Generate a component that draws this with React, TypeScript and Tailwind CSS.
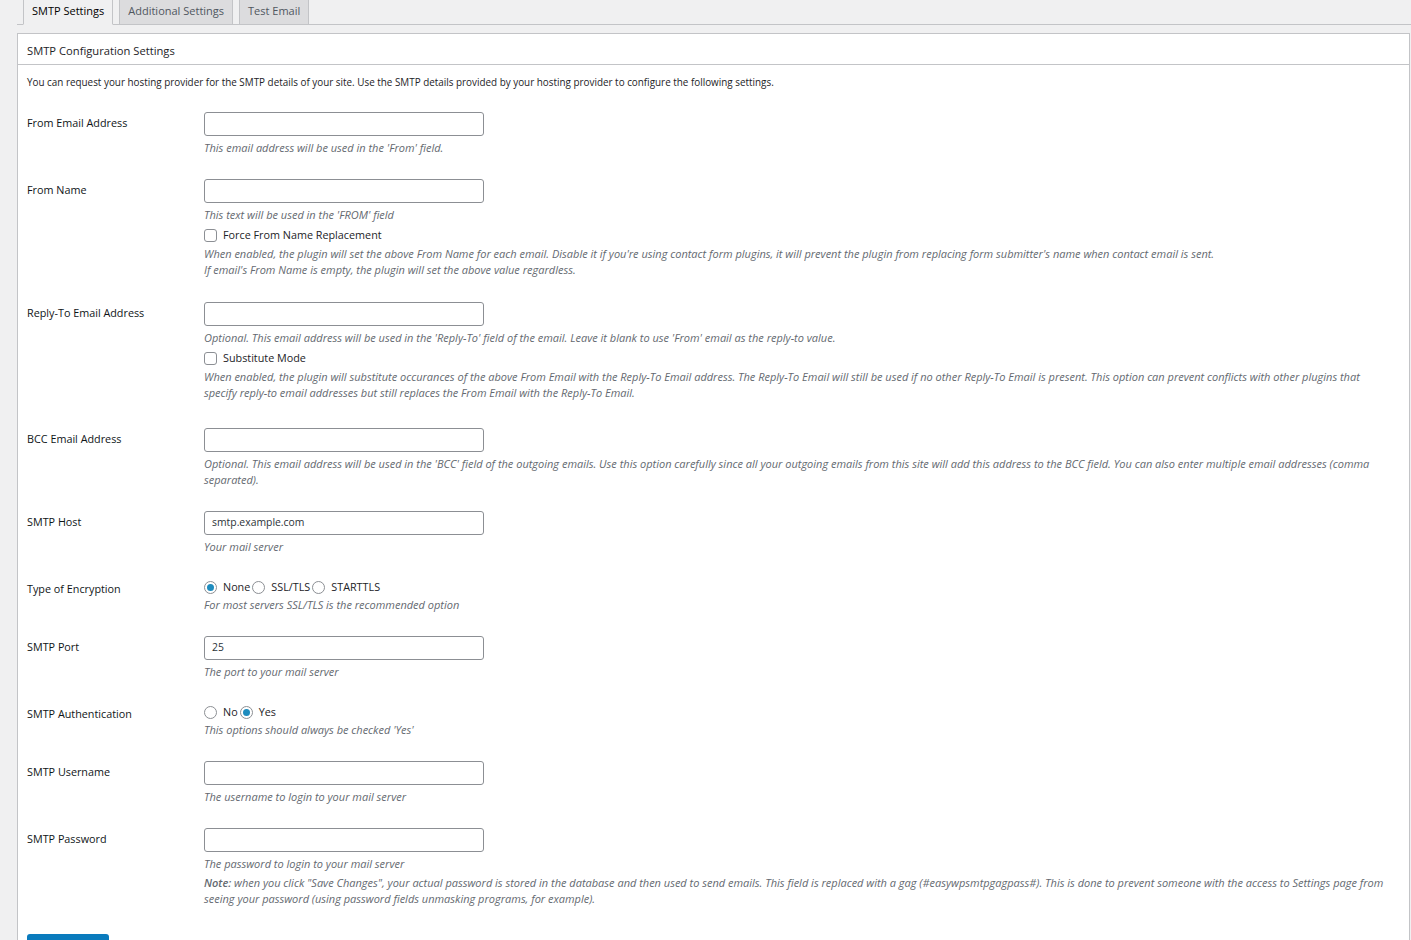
import React from "react";

function Desc({ children, className = "" }: { children: React.ReactNode; className?: string }) {
  return <p className={"text-[11px] italic leading-[16px] text-[#646970] " + className}>{children}</p>;
}

function TextInput({ value = "" }: { value?: string }) {
  return (
    <div className="flex h-[24px] w-[280px] items-center rounded-[3px] border border-[#8c8f94] bg-white px-[7px] text-[10.4px] text-[#2c3338]">
      {value}
    </div>
  );
}

function Checkbox({ label }: { label: string }) {
  return (
    <div className="mt-[4px] flex h-[16px] items-center">
      <span className="h-[13px] w-[13px] rounded-[3px] border border-[#8c8f94] bg-white" />
      <span className="ml-[6px]">{label}</span>
    </div>
  );
}

function Radio({ label, checked }: { label: string; checked?: boolean }) {
  return (
    <span className="flex items-center">
      <span className="flex h-[13px] w-[13px] items-center justify-center rounded-full border border-[#8c8f94] bg-white">
        {checked ? <span className="h-[7px] w-[7px] rounded-full bg-[#1e8cbe]" /> : null}
      </span>
      <span className="ml-[6px] mr-[2px]">{label}</span>
    </span>
  );
}

function Row({
  label,
  children,
  pt = "pt-[12px]",
  pb = "pb-[11px]",
  labelPt = "pt-[3px]",
}: {
  label: string;
  children: React.ReactNode;
  pt?: string;
  pb?: string;
  labelPt?: string;
}) {
  return (
    <div className={"grid grid-cols-[177px_1fr] " + pt + " " + pb}>
      <div className={"text-[10.8px] font-medium leading-[16px] text-[#101517] " + labelPt}>{label}</div>
      <div>{children}</div>
    </div>
  );
}

export default function App() {
  return (
    <div className="min-h-[940px] overflow-hidden bg-[#f0f0f1] font-['Open_Sans',sans-serif] text-[10.8px] text-[#1d2327]">
      {/* Tabs */}
      <div className="ml-[17px] flex h-[25px] gap-[6px] border-b border-[#c3c4c7] pl-[5px] text-[11px]">
        <div className="-mb-px ml-[1px] flex h-[25px] items-center border-x border-b border-[#c3c4c7] border-b-[#f0f0f1] bg-[#f0f0f1] px-[8px] pb-[2px] text-[#000]">
          SMTP Settings
        </div>
        <div className="-mb-px flex h-[25px] items-center border-x border-b border-[#c3c4c7] bg-[#dcdcde] px-[8px] pb-[2px] text-[#50575e]">
          Additional Settings
        </div>
        <div className="-mb-px flex h-[25px] items-center border-x border-b border-[#c3c4c7] bg-[#dcdcde] px-[8px] pb-[2px] text-[#50575e]">
          Test Email
        </div>
      </div>

      {/* Panel */}
      <div className="ml-[17px] mr-[1px] mt-[8px] border border-[#c3c4c7] bg-white">
        <div className="flex h-[31px] items-center border-b border-[#c3c4c7] px-[9px] pt-[4px] text-[11.2px]">
          SMTP Configuration Settings
        </div>
        <div className="pl-[9px] pr-[18px] pt-[9px]">
          <p className="mb-[10px] text-[9.9px] leading-[16px]">
            You can request your hosting provider for the SMTP details of your site. Use the SMTP details provided by your hosting provider to configure the following settings.
          </p>

          <Row label="From Email Address">
            <TextInput />
            <Desc className="mt-[4px]">This email address will be used in the 'From' field.</Desc>
          </Row>

          <Row label="From Name" pb="pb-[12px]">
            <TextInput />
            <Desc className="mt-[4px]">This text will be used in the 'FROM' field</Desc>
            <Checkbox label="Force From Name Replacement" />
            <Desc className="mt-[3px]">
              When enabled, the plugin will set the above From Name for each email. Disable it if you're using contact form plugins, it will prevent the plugin from replacing form submitter's name when contact email is sent.
              <br />
              If email's From Name is empty, the plugin will set the above value regardless.
            </Desc>
          </Row>

          <Row label="Reply-To Email Address" pb="pb-[15px]">
            <TextInput />
            <Desc className="mt-[4px]">
              Optional. This email address will be used in the 'Reply-To' field of the email. Leave it blank to use 'From' email as the reply-to value.
            </Desc>
            <Checkbox label="Substitute Mode" />
            <Desc className="mt-[3px]">
              When enabled, the plugin will substitute occurances of the above From Email with the Reply-To Email address. The Reply-To Email will still be used if no other Reply-To Email is present. This option can prevent conflicts with other plugins that specify reply-to email addresses but still replaces the From Email with the Reply-To Email.
            </Desc>
          </Row>

          <Row label="BCC Email Address">
            <TextInput />
            <Desc className="mt-[4px]">
              Optional. This email address will be used in the 'BCC' field of the outgoing emails. Use this option carefully since all your outgoing emails from this site will add this address to the BCC field. You can also enter multiple email addresses (comma separated).
            </Desc>
          </Row>

          <Row label="SMTP Host">
            <TextInput value="smtp.example.com" />
            <Desc className="mt-[4px]">Your mail server</Desc>
          </Row>

          <Row label="Type of Encryption" pt="pt-[13px]" labelPt="pt-[2px]" pb="pb-[11px]">
            <div className="flex h-[16px] items-center">
              <Radio label="None" checked />
              <Radio label="SSL/TLS" />
              <Radio label="STARTTLS" />
            </div>
            <Desc className="mt-[2px]">For most servers SSL/TLS is the recommended option</Desc>
          </Row>

          <Row label="SMTP Port">
            <TextInput value="25" />
            <Desc className="mt-[4px]">The port to your mail server</Desc>
          </Row>

          <Row label="SMTP Authentication" pt="pt-[13px]" labelPt="pt-[2px]" pb="pb-[11px]">
            <div className="flex h-[16px] items-center">
              <Radio label="No" />
              <Radio label="Yes" checked />
            </div>
            <Desc className="mt-[2px]">This options should always be checked 'Yes'</Desc>
          </Row>

          <Row label="SMTP Username">
            <TextInput />
            <Desc className="mt-[4px]">The username to login to your mail server</Desc>
          </Row>

          <Row label="SMTP Password" pb="pb-[27px]">
            <TextInput />
            <Desc className="mt-[4px]">The password to login to your mail server</Desc>
            <Desc className="mt-[3px]">
              <b className="font-semibold">Note:</b> when you click "Save Changes", your actual password is stored in the database and then used to send emails. This field is replaced with a gag (#easywpsmtpgagpass#). This is done to prevent someone with the access to Settings page from seeing your password (using password fields unmasking programs, for example).
            </Desc>
          </Row>

          <div className="h-[24px] w-[82px] rounded-[3px] bg-[#0a7bbd]" />
        </div>
      </div>
    </div>
  );
}
